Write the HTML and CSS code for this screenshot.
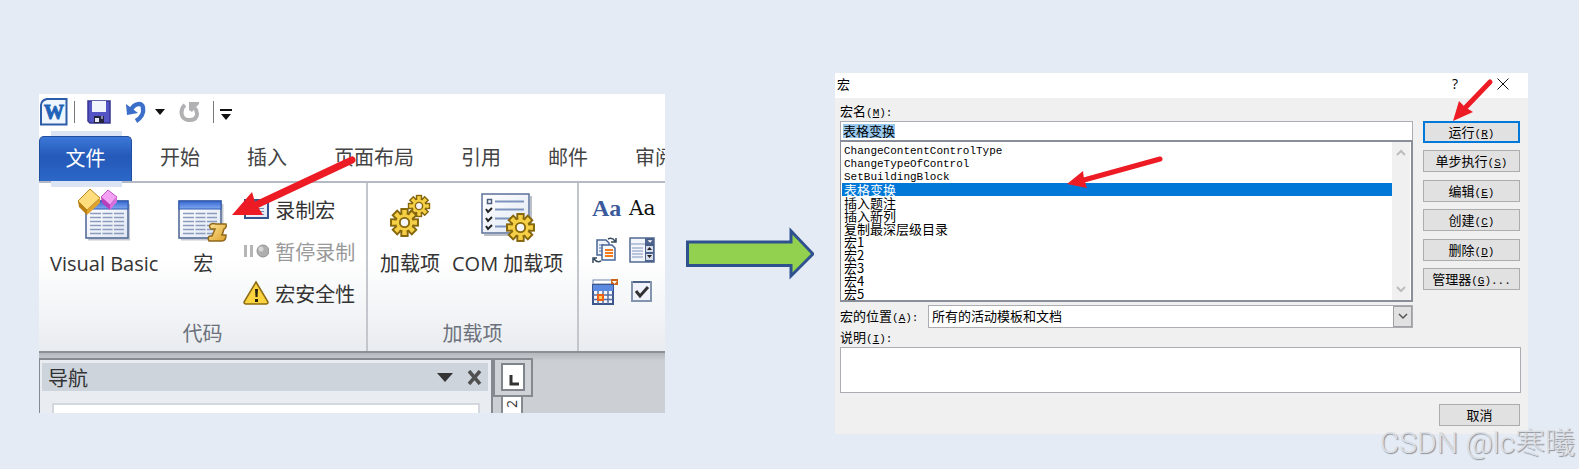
FILE: index.html
```html
<!DOCTYPE html>
<html lang="zh-CN">
<head>
  <meta charset="UTF-8" />
  <title>Word 宏</title>
  <meta name="viewport" content="width=device-width, initial-scale=1.0">
  <link rel="stylesheet" href="styles.css">
</head>
<body>

  <!-- shared shapes -->
  <svg class="defs" aria-hidden="true">
    <defs>
      <linearGradient id="paper" x1="0" y1="0" x2="1" y2="1"><stop offset="0" stop-color="#fff"/><stop offset="1" stop-color="#dfe6f3"/></linearGradient>
      <linearGradient id="blueBar" x1="0" y1="0" x2="0" y2="1"><stop offset="0" stop-color="#3567cf"/><stop offset="1" stop-color="#82aaf2"/></linearGradient>
      <linearGradient id="gold" x1="0" y1="0" x2="1" y2="1"><stop offset="0" stop-color="#ffe69a"/><stop offset="1" stop-color="#dda02a"/></linearGradient>
      <symbol id="gear" viewBox="-15 -15 30 30">
        <g fill="#f5cf45" stroke="#86670c" stroke-width="2">
          <rect x="-3" y="-13" width="6" height="26"/>
          <rect x="-3" y="-13" width="6" height="26" transform="rotate(45)"/>
          <rect x="-3" y="-13" width="6" height="26" transform="rotate(90)"/>
          <rect x="-3" y="-13" width="6" height="26" transform="rotate(135)"/>
          <circle r="9"/>
        </g>
        <g fill="#f5cf45">
          <rect x="-2" y="-12" width="4" height="24"/>
          <rect x="-2" y="-12" width="4" height="24" transform="rotate(45)"/>
          <rect x="-2" y="-12" width="4" height="24" transform="rotate(90)"/>
          <rect x="-2" y="-12" width="4" height="24" transform="rotate(135)"/>
        </g>
        <circle r="4.5" fill="#f4f6fa" stroke="#86670c" stroke-width="1.8"/>
      </symbol>
      <symbol id="sheet" viewBox="0 0 46 41">
        <path d="M3 39.500H44.500V4" fill="none" stroke="#c5c9d1" stroke-width="2"/>
        <rect x="1" y="1" width="42" height="37" fill="url(#paper)" stroke="#4a6392" stroke-width="1.500"/>
        <rect x="1" y="1" width="42" height="8" fill="url(#blueBar)" stroke="#2c56b0"/>
        <path d="M5 13.500H16M17.500 13.500H27.500M29 13.500H39M5 17.500H16M17.500 17.500H27.500M29 17.500H39M5 21.500H16M17.500 21.500H27.500M29 21.500H39M5 25.500H16M17.500 25.500H27.500M29 25.500H39M5 29.500H16M17.500 29.500H27.500M29 29.500H39M5 33.500H16M17.500 33.500H27.500M29 33.500H39" stroke="#8a9bbd" stroke-width="1.500"/>
      </symbol>
    </defs>
  </svg>

  <main class="stage">

    <!-- Word window -->
    <section class="word">
      <header class="quick-bar">
        <svg width="28" height="28" viewBox="0 0 28 28">
          <path d="M7 1H26.500V26.500H1V7Q1.500 2 7 1Z" fill="#eef5fc" stroke="#2d5ca8" stroke-width="2"/>
          <text x="14" y="21" class="word-letter">W</text>
        </svg>
        <span class="bar-line"></span>
        <button type="button" class="icon-btn save" aria-label="保存">
          <svg width="24" height="24" viewBox="0 0 24 24">
            <path d="M1 1H23V23H3L1 21Z" fill="#5454c4" stroke="#35358e" stroke-width="1.500"/>
            <path d="M5 1H19V12H5Z" fill="#f1f4fb"/><path d="M7 16H17V23H7Z" fill="#24243e"/>
            <path d="M8 18H12V22H8Z" fill="#e8eaf4"/><path d="M14 16H16V19H14Z" fill="#888bb0"/>
          </svg>
        </button>
        <button type="button" class="icon-btn undo" aria-label="撤消">
          <svg width="22" height="22" viewBox="0 0 22 22">
            <path d="M6 9C9 2 18 1 18 7C19 12 16 17 11 20" fill="none" stroke="#3c6fc9" stroke-width="4.500"/>
            <path d="M1 3L2 14L13 12Z" fill="#3c6fc9"/>
          </svg>
        </button>
        <svg width="10" height="6" viewBox="0 0 10 6"><path d="M0 0H10L5 6Z" fill="#111"/></svg>
        <button type="button" class="icon-btn redo" aria-label="重复">
          <svg width="22" height="22" viewBox="0 0 22 22">
            <path d="M6 4C1 8 1 18 9 19C18 20 20 13 16 7" fill="none" stroke="#b1b1b3" stroke-width="4"/>
            <path d="M10 1H20V3L17 6L13 11L10 9Z" fill="#b1b1b3"/>
          </svg>
        </button>
        <span class="bar-line"></span>
        <svg class="more" width="12" height="11" viewBox="0 0 12 11"><path d="M0 0H12V2H0ZM1 5H11L6 11Z" fill="#111"/></svg>
      </header>

      <nav class="tabs">
        <a href="#" class="tab file"><span>文件</span></a>
        <a href="#" class="tab">开始</a>
        <a href="#" class="tab">插入</a>
        <a href="#" class="tab">页面布局</a>
        <a href="#" class="tab">引用</a>
        <a href="#" class="tab">邮件</a>
        <a href="#" class="tab">审阅</a>
      </nav>

      <div class="ribbon">
        <div class="group code">
          <div class="tools">
            <button type="button" class="big">
              <svg width="52" height="54" viewBox="0 0 52 54">
                <use href="#sheet" x="7" y="12" width="46" height="41"/>
                <path d="M0 13L12 1L22 10L9 22Z" fill="#ffdc7c" stroke="#b8861d"/><path d="M0 13L9 22V27L1 19Z" fill="#b97f12"/><path d="M9 22L22 10V15L9 27Z" fill="#dfa32d"/>
                <path d="M23 9L30 2L39 9L32 17Z" fill="#f3a2f3" stroke="#c654c8"/><path d="M23 9L32 17V22L24 15Z" fill="#b93fbb"/><path d="M32 17L39 9V14L32 22Z" fill="#db6fdc"/>
              </svg>
              <span>Visual Basic</span>
            </button>
            <button type="button" class="big">
              <svg width="50" height="54" viewBox="0 0 50 54">
                <use href="#sheet" x="0" y="12" width="46" height="41"/>
                <path d="M33 36Q35 35 38 36H48Q49 40 46 41L44 47H48Q48 53 44 53H31Q29 49 32 48H34L37 41H33Q30 38 33 36Z" fill="url(#gold)" stroke="#8f681a" stroke-width="1.500"/>
              </svg>
              <span>宏</span>
            </button>
            <div class="rows">
              <button type="button" class="small">
                <svg width="26" height="26" viewBox="0 0 26 26"><rect x="2" y="4" width="23" height="18" fill="url(#paper)" stroke="#35548f" stroke-width="2"/><path d="M2 5H25V8H2Z" fill="#3f71d1"/><path d="M12 12.500H21M12 15.500H21M12 18.500H21" stroke="#7488b0"/></svg>
                录制宏
              </button>
              <button type="button" class="small off" disabled>
                <svg width="26" height="26" viewBox="0 0 26 26"><path d="M1 7H4V19H1ZM7 7H10V19H7Z" fill="#b5b5b5"/><circle cx="20" cy="13" r="6" fill="#aeaeae" stroke="#929292"/><circle cx="18" cy="11" r="2.500" fill="#d6d6d6"/></svg>
                暂停录制
              </button>
              <button type="button" class="small">
                <svg width="26" height="26" viewBox="0 0 26 26"><path d="M13 2L25 22Q25 24 23 24H3Q1 24 1 22Z" fill="#fbd33f" stroke="#8b6b13" stroke-width="1.500"/><path d="M12 9H15L14.500 17H12.500ZM12 19H15V22H12Z" fill="#26220e"/></svg>
                宏安全性
              </button>
            </div>
          </div>
          <div class="group-name">代码</div>
        </div>

        <div class="group addins">
          <div class="tools">
            <button type="button" class="big">
              <svg width="44" height="54" viewBox="0 0 44 54">
                <use href="#gear" x="19" y="6" width="24" height="24"/>
                <use href="#gear" x="1" y="19" width="31" height="31"/>
              </svg>
              <span>加载项</span>
            </button>
            <button type="button" class="big">
              <svg width="54" height="54" viewBox="0 0 54 54">
                <path d="M3 47H50V8" fill="none" stroke="#babfc9" stroke-width="2"/>
                <rect x="1" y="6" width="47" height="39" fill="url(#paper)" stroke="#5c7099" stroke-width="1.500"/>
                <path d="M14 13.500H43M14 21.500H43M14 30.500H30M14 38.500H26" stroke="#7c93bd" stroke-width="2"/>
                <rect x="6.500" y="11.500" width="4" height="4" fill="none" stroke="#4c5d80" stroke-width="1.500"/>
                <path d="M5 21L7 24L11 20M5 30L7 33L11 29M5 38L7 41L11 37" fill="none" stroke="#222" stroke-width="2"/>
                <use href="#gear" x="24" y="24" width="31" height="31"/>
              </svg>
              <span>COM 加载项</span>
            </button>
          </div>
          <div class="group-name">加载项</div>
        </div>

        <div class="group controls">
          <button type="button" class="aa rich">Aa</button>
          <button type="button" class="aa">Aa</button>
          <button type="button" class="icon-btn" aria-label="构建基块">
            <svg width="26" height="26" viewBox="0 0 26 26">
              <path d="M5 3H14L17 6V18H5Z" fill="#eef3fb" stroke="#4a6596" stroke-width="1.500"/><path d="M7 8H12M7 11H11M7 14H11" stroke="#5878b0"/>
              <path d="M10 8H20L23 11V23H10Z" fill="#f5f8fd" stroke="#4a6596" stroke-width="1.500"/><path d="M13 13H21M13 16H21M13 19H21" stroke="#f07a1c" stroke-width="2"/>
              <path d="M16 2Q20 0 23 4M24 1V5H19M9 24Q5 26 2 22M1 26V21H5" fill="none" stroke="#34495e" stroke-width="1.500"/>
            </svg>
          </button>
          <button type="button" class="icon-btn" aria-label="组合框">
            <svg width="26" height="26" viewBox="0 0 26 26">
              <rect x="1" y="1" width="24" height="24" fill="#f2f5fa" stroke="#536a93" stroke-width="1.500"/><path d="M1 7H17M3 11H14M3 14H14M3 17H14M3 20H14" stroke="#8095bd"/>
              <path d="M16 1H25V25H16Z" fill="#4b638e"/><path d="M17 9H24V15H17ZM17 17H24V23H17Z" fill="#d7deea"/><path d="M18 3H24L21 6ZM16 8H25" fill="#fff" stroke="#344a73" stroke-width=".5"/><path d="M18 13H23L20.500 10ZM18 18H23L20.500 21Z" fill="#222"/>
            </svg>
          </button>
          <button type="button" class="icon-btn" aria-label="日期选取器">
            <svg width="26" height="26" viewBox="0 0 26 26">
              <rect x="1" y="1" width="24" height="4" fill="#fff" stroke="#7085aa"/><path d="M19 0H26V6H19Z" fill="#cc641b"/><path d="M20 2H25L22.500 5Z" fill="#fff"/>
              <rect x="1" y="6" width="20" height="19" fill="#f5f7fc" stroke="#3c568c" stroke-width="2"/><path d="M1 6H21V12H1Z" fill="#5c8ae0"/>
              <path d="M1 16H21M1 20.500H21M6 12V25M11 12V25M16 12V25" stroke="#536da0" stroke-width="1.500"/><rect x="6" y="16" width="5" height="5" fill="#ffd25c" stroke="#ee601a" stroke-width="2"/>
            </svg>
          </button>
          <button type="button" class="icon-btn" aria-label="复选框">
            <svg width="26" height="26" viewBox="0 0 26 26"><rect x="3" y="3" width="19" height="19" fill="#f0f3fb" stroke="#8493ae" stroke-width="2"/><path d="M4 3H21" stroke="#4e6286" stroke-width="2"/><path d="M7 12L11 17L19 8" fill="none" stroke="#333" stroke-width="3"/></svg>
          </button>
        </div>
      </div>

      <div class="workspace">
        <aside class="nav-pane">
          <div class="nav-head">
            <span>导航</span>
            <button type="button" class="icon-btn" aria-label="选项"><svg width="16" height="9" viewBox="0 0 16 9"><path d="M0 0H16L8 9Z" fill="#333"/></svg></button>
            <button type="button" class="icon-btn" aria-label="关闭"><svg width="15" height="15" viewBox="0 0 15 15"><path d="M2 1L13 14M13 1L2 14" stroke="#505050" stroke-width="3.500"/></svg></button>
          </div>
          <input type="text" class="nav-search" aria-label="搜索文档">
        </aside>
        <div class="ruler">
          <div class="corner"><svg width="24" height="28" viewBox="0 0 24 28"><rect x="1" y="1" width="22" height="26" fill="#fff" stroke="#80848c" stroke-width="2"/><path d="M10 12V21H18" fill="none" stroke="#333" stroke-width="3"/></svg></div>
          <div class="scale"><span>2</span></div>
        </div>
      </div>

      <svg class="pointer to-macro" width="125" height="64" viewBox="0 0 125 64"><path d="M121 5L25 50" stroke="#ed1c24" stroke-width="7" stroke-linecap="round"/><path d="M1 60L21 37L24 47L32 60Z" fill="#ed1c24"/></svg>
    </section>

    <svg class="next" width="128" height="54" viewBox="0 0 128 54"><path d="M1.500 15H105V4L127 27L105 49V38.500H1.500Z" fill="#92d050" stroke="#2f528f" stroke-width="3"/></svg>

    <!-- macro dialog -->
    <section class="dialog">
      <header class="title-bar">
        <span class="title">宏</span>
        <button type="button" class="icon-btn help">?</button>
        <button type="button" class="icon-btn close" aria-label="关闭"><svg width="12" height="12" viewBox="0 0 12 12"><path d="M0.500 0.500L11.500 11.500M11.500 0.500L0.500 11.500" stroke="#111"/></svg></button>
      </header>

      <form class="macro-form">
        <label for="macroName">宏名<span class="key">(<u>M</u>):</span></label>
        <div class="upper">
          <div class="names">
            <input type="text" id="macroName" value="表格变换">
            <div class="list">
              <select size="12" aria-label="宏列表">
                <option class="en">ChangeContentControlType</option>
                <option class="en">ChangeTypeOfControl</option>
                <option class="en">SetBuildingBlock</option>
                <option selected>表格变换</option>
                <option>插入题注</option>
                <option>插入新列</option>
                <option>复制最深层级目录</option>
                <option>宏1</option>
                <option>宏2</option>
                <option>宏3</option>
                <option>宏4</option>
                <option>宏5</option>
              </select>
              <div class="scroll">
                <svg width="10" height="7" viewBox="0 0 10 7"><path d="M1 6L5 2L9 6" fill="none" stroke="#bcbcbc" stroke-width="2"/></svg>
                <svg width="10" height="7" viewBox="0 0 10 7"><path d="M1 1L5 5L9 1" fill="none" stroke="#bcbcbc" stroke-width="2"/></svg>
              </div>
            </div>
          </div>
          <div class="actions">
            <button type="button" class="push default">运行<span class="key">(<u>R</u>)</span></button>
            <button type="button" class="push">单步执行<span class="key">(<u>S</u>)</span></button>
            <button type="button" class="push">编辑<span class="key">(<u>E</u>)</span></button>
            <button type="button" class="push">创建<span class="key">(<u>C</u>)</span></button>
            <button type="button" class="push">删除<span class="key">(<u>D</u>)</span></button>
            <button type="button" class="push">管理器<span class="key">(<u>G</u>)...</span></button>
          </div>
        </div>

        <div class="place">
          <label for="macroPlace">宏的位置<span class="key">(<u>A</u>):</span></label>
          <div class="combo">
            <select id="macroPlace"><option>所有的活动模板和文档</option></select>
            <span class="drop"><svg width="10" height="7" viewBox="0 0 10 7"><path d="M1 1L5 5L9 1" fill="none" stroke="#555" stroke-width="1.500"/></svg></span>
          </div>
        </div>

        <label for="macroNote">说明<span class="key">(<u>I</u>):</span></label>
        <textarea id="macroNote"></textarea>
        <button type="button" class="push cancel">取消</button>
      </form>

      <svg class="pointer to-item" width="98" height="36" viewBox="0 0 98 36"><path d="M94 4L18 25" stroke="#ed1c24" stroke-width="5" stroke-linecap="round"/><path d="M1 29L17 16L18 24L21 33Z" fill="#ed1c24"/></svg>
      <svg class="pointer to-run" width="42" height="44" viewBox="0 0 42 44"><path d="M38 4L14 29" stroke="#ed1c24" stroke-width="5" stroke-linecap="round"/><path d="M1 43L7 23L13 29L21 34Z" fill="#ed1c24"/></svg>
    </section>
  </main>

  <div class="watermark">CSDN @lc寒曦</div>

</body>
</html>
```

FILE: styles.css
```css
* {
  margin: 0; padding: 0; box-sizing: border-box;
}
body {
  position: relative;
  min-height: 100vh;
  background: #e4ebf5;
  font-family: "Noto Sans CJK SC", sans-serif;
  overflow: hidden;
}
svg { display: block; flex: none; }
button {
  font: inherit; color: inherit;
  background: none; border: none;
  cursor: pointer;
}
.defs { position: absolute; width: 0; height: 0; }

.stage {
  display: flex; align-items: flex-start;
  gap: 21px;
  padding: 73px 51px 35px 39px;
}

/* ---------- Word ---------- */
.word {
  position: relative;
  flex: 626 1 0; min-width: 0;
  margin-top: 21px;
  background: #fff;
  overflow: hidden;
  font-family: "Open Sans", "Noto Sans CJK SC", sans-serif;
  font-size: 20px; color: #333;
}
.quick-bar {
  display: flex; align-items: center;
  height: 42px; padding: 0 1px 6px;
}
.word-letter {
  font-family: "Liberation Serif", serif;
  font-size: 20px; font-weight: bold;
  fill: #1f63b8; stroke: #1f63b8;
  text-anchor: middle;
}
.bar-line { width: 1px; height: 22px; margin: 0 6px; background: #777; }
.save { margin: 0 14px 0 6px; }
.undo { margin-right: 8px; }
.redo { margin: 0 6px 0 14px; }
.more { margin-top: 4px; }

.tabs {
  display: flex;
  height: 47px;
  border-bottom: 2px solid #b4bac3;
  white-space: nowrap;
}
.tab {
  flex: none;
  padding: 0 24px 0 23px;
  line-height: 43px;
  color: #444; text-decoration: none;
}
.tab.file {
  position: relative;
  display: flex;
  width: 93px; padding: 0; margin-right: 5px;
  color: #fff;
}
/* pale strip behind the file tab */
.tab.file::before {
  content: "";
  position: absolute; left: 12px; right: 10px; top: -5px; bottom: -6px;
  background: #dbe4f4;
}
.tab.file span {
  position: relative;
  flex: 1; text-align: center;
  background: linear-gradient(#3c78d8, #2459b8 45%, #2c68c8);
  border: 1px solid #1f4e9e; border-bottom: none;
  border-radius: 5px 5px 0 0;
}

.ribbon {
  display: flex;
  height: 170px;
  background: linear-gradient(#fff 45%, #e9ecf0);
  border-bottom: 2px solid #8b8f96;
}
.group {
  display: flex; flex-direction: column; justify-content: space-between;
  flex: none;
  border-right: 2px solid #c3c7cd;
}
.tools { display: flex; align-items: flex-start; padding-top: 5px; }
.code { width: 329px; }
.addins { width: 211px; }
.big {
  display: flex; flex-direction: column; align-items: center;
  gap: 8px;
  line-height: 28px;
  white-space: nowrap;
}
.code .tools { padding-left: 11px; gap: 20px; }
.addins .tools { padding-left: 12px; gap: 12px; }
.code .rows { margin-left: -5px; }
.small {
  display: flex; align-items: center;
  height: 42px; gap: 6px;
  white-space: nowrap;
}
.small.off { color: #999; }
.group-name {
  text-align: center;
  line-height: 34px;
  color: #6c717b;
}
.controls {
  display: grid;
  grid-template-columns: 26px 26px;
  grid-auto-rows: 42px;
  align-items: center; justify-content: start; align-content: start;
  column-gap: 11px;
  padding: 4px 0 0 13px;
  border: none;
}
.aa { font-family: "DejaVu Serif", serif; font-size: 20px; color: #111; }
.aa.rich { font-family: "Liberation Serif", serif; font-size: 24px; font-weight: bold; color: #3b5a9c; }

.workspace {
  display: flex;
  height: 60px; padding-top: 5px;
  background: linear-gradient(#b4b7bc, #cccfd4 8px);
}
.nav-pane {
  flex: none; width: 454px;
  padding: 3px 3px 0 2px;
  background: #e9edf2;
  border: 2px solid #858990; border-bottom: none; border-left-width: 1px;
}
.nav-head {
  display: flex; align-items: center; gap: 14px;
  height: 28px; padding: 0 6px;
  background: #cdd4dc;
}
.nav-head span { flex: 1; }
.nav-search {
  display: block;
  width: calc(100% - 18px); height: 20px;
  margin: 12px 8px 0 10px;
  border: 2px solid #d3d8de;
}
.corner {
  padding: 3px 6px 4px;
  border: 2px solid #858990; background: #cfd2d7;
}
.scale {
  width: 22px; height: 20px; margin-left: 8px;
  background: #fff; border: 2px solid #858990; border-top: none;
  font-size: 14px; line-height: 14px; text-align: center;
}
.scale span { display: block; transform: rotate(-90deg); }

.next { margin-top: 154px; }
.pointer { position: absolute; pointer-events: none; }
.to-macro { left: 192px; top: 61px; }

/* ---------- dialog ---------- */
.dialog {
  position: relative;
  flex: 693 1 0; min-width: 0;
  background: #f0f0f0;
  font-size: 13px; color: #000;
}
.title-bar {
  display: flex; align-items: center;
  height: 25px; padding: 0 19px 4px 2px;
  background: #fff;
}
.title { flex: 1; }
.help { margin-right: 39px; font-family: "Open Sans", sans-serif; font-size: 14px; }

.macro-form {
  display: flex; flex-direction: column;
  padding: 4px 7px 8px 5px;
}
.macro-form label { height: 19px; line-height: 17px; white-space: nowrap; }
.key { font-family: "Liberation Mono", monospace; font-size: 11px; line-height: 1; }

.upper { display: flex; gap: 10px; }
.names { flex: 1; min-width: 0; }
#macroName {
  display: block;
  width: 100%; height: 19px; padding: 0 0 2px 2px;
  font: inherit;
  border: 1px solid #abadb3; border-bottom: none;
  background: linear-gradient(#99c9ef, #99c9ef) 2px 2px / 52px 14px no-repeat #fff;
}
.list {
  display: flex;
  height: 162px; padding: 0 1px;
  background: #fff; border: 2px solid #8a8e99; border-left-width: 1px;
}
.list select {
  flex: 1; min-width: 0; height: 158px; padding-top: 2px;
  font: inherit;
  border: none; outline: none; background: #fff;
  overflow: hidden;
}
/* rows are tighter than the glyph box, so centre the overflow */
.list option {
  display: flex; align-items: center;
  height: 13px; min-height: 13px; padding: 0 2px;
  color: #000;
}
.list option.en { font-family: "Liberation Mono", monospace; font-size: 11px; }
.list option:checked {
  color: #fff;
  background: #0078d7 linear-gradient(#0078d7, #0078d7);
}
.scroll {
  display: flex; flex-direction: column; align-items: center; justify-content: space-between;
  width: 18px; padding: 7px 0;
  background: #f0f0f0;
}

.actions {
  display: flex; flex-direction: column; justify-content: space-between;
  width: 97px; margin-right: 1px; padding-bottom: 12px;
}
.push {
  height: 22px;
  line-height: 18px; white-space: nowrap;
  background: #e1e1e1; border: 1px solid #adadad;
}
.push.default { border: 2px solid #0078d7; line-height: 16px; }
.push.cancel { align-self: flex-end; width: 81px; margin: 11px 1px 0 0; }

.place {
  display: flex; align-items: center;
  margin: 3px 108px 0 0;
}
.place label { width: 88px; }
.combo {
  display: flex; flex: 1;
  height: 23px;
  background: #fff; border: 1px solid #abadb3;
}
.combo select {
  flex: 1; min-width: 0; padding: 0 0 2px 3px;
  font: inherit; color: #000;
  appearance: none; border: none; background: none;
}
.drop {
  display: flex; align-items: center; justify-content: center;
  width: 19px;
  background: #e1e1e1; border: 1px solid #a0a0a0;
}
#macroNote {
  display: block;
  width: 100%; height: 46px;
  border: 1px solid #abadb3; background: #fff;
  resize: none;
}
.to-item { left: 231px; top: 82px; }
.to-run { right: 34px; top: 5px; }

.watermark {
  position: absolute; right: 4px; bottom: 6px;
  font-family: Roboto, "Noto Sans CJK SC", sans-serif;
  font-size: 30px; font-weight: 300; line-height: 40px;
  color: #dcdfe4;
  text-shadow: 1px 1px 1px #8b8f96;
}
```
